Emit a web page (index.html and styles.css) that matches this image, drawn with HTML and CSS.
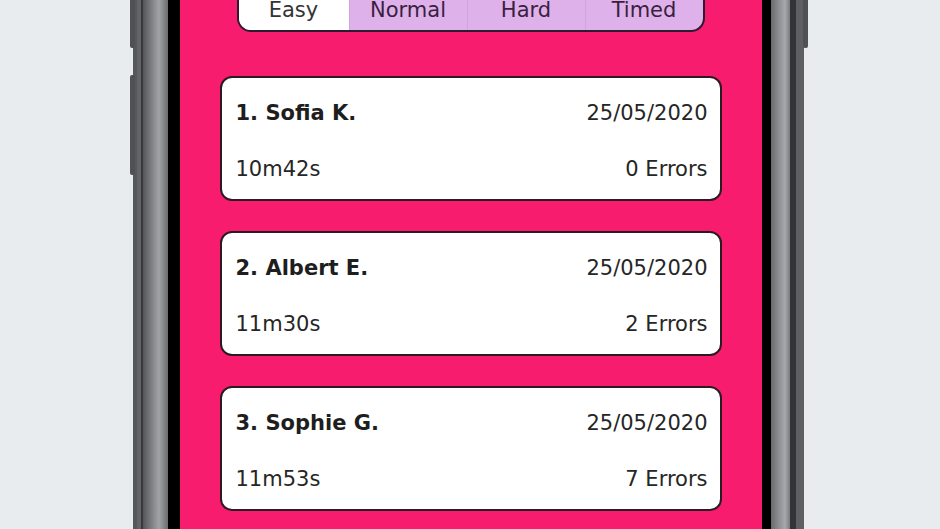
FILE: index.html
```html
<html>

<head>
  <title>Leaderboard</title>
  <link rel="stylesheet" href="styles.css">
</head>

<body>

  <div class="phone">
    <span class="btn btn-mute"></span>
    <span class="btn btn-volume"></span>
    <span class="btn btn-power"></span>
    <main class="screen">
      <nav class="modes">
        <span class="mode active">Easy</span>
        <span class="mode">Normal</span>
        <span class="mode">Hard</span>
        <span class="mode">Timed</span>
      </nav>
      <section class="scores">
        <article class="score">
          <div class="row">
            <span class="name">1. Sofia K.</span>
            <span>25/05/2020</span>
          </div>
          <div class="row">
            <span>10m42s</span>
            <span>0 Errors</span>
          </div>
        </article>
        <article class="score">
          <div class="row">
            <span class="name">2. Albert E.</span>
            <span>25/05/2020</span>
          </div>
          <div class="row">
            <span>11m30s</span>
            <span>2 Errors</span>
          </div>
        </article>
        <article class="score">
          <div class="row">
            <span class="name">3. Sophie G.</span>
            <span>25/05/2020</span>
          </div>
          <div class="row">
            <span>11m53s</span>
            <span>7 Errors</span>
          </div>
        </article>
      </section>
    </main>
  </div>

</body>

</html>
```
FILE: styles.css
```css
body {
  margin: 0;
  padding-right: 4px;
  height: 100vh;
  overflow: hidden;
  background-color: #e8ecef;
  font-family: "Comic Sans MS", "DejaVu Sans", sans-serif;
}

/* device frame, cut off above and below the window */
.phone {
  position: relative;
  width: 671px;
  height: 660px;
  margin: -57px auto 0;
  display: flex;
  background: linear-gradient(to right,
      #56575b 0, #56575b 4px,
      #636468 4px, #636468 8px,
      #38393d 8px, #38393d 10px,
      #55565a 10px, #a2a3a7 26px, #6b6c70 35px,
      #000 35px, #000 calc(100% - 33px),
      #6a6b6f calc(100% - 33px), #a8a9ad calc(100% - 19px), #7a7b7f calc(100% - 14px),
      #333438 calc(100% - 14px), #333438 calc(100% - 8px),
      #5e5f63 calc(100% - 8px));
}

.btn {
  position: absolute;
  width: 5px;
  border-radius: 2px;
  background-color: #505155;
}

.btn-mute {
  left: -3px;
  top: 0;
  height: 105px;
}

.btn-volume {
  left: -3px;
  top: 132px;
  height: 100px;
}

.btn-power {
  right: -4px;
  top: 0;
  height: 105px;
}

.screen {
  flex: 1;
  margin: 0 33px 0 35px;
  border-left: 12px solid #000;
  border-right: 9px solid #000;
  background-color: #f81c6f;
  padding: 47px 40px 0;
  display: flex;
  flex-direction: column;
}

.modes {
  display: flex;
  height: 40px;
  margin: 0 17px;
  border: 2px solid #2d1a2e;
  border-top: none;
  border-radius: 0 0 14px 14px;
  overflow: hidden;
  background-color: #dfb1ea;
}

.mode {
  flex: 1;
  display: flex;
  align-items: center;
  justify-content: center;
  font-size: 21px;
  color: #3a1f3f;
  border-left: 1px solid #d3a3de;
}

.mode:first-child {
  border-left: none;
}

.mode.active {
  background-color: #fff;
  color: #333;
  flex: 0 0 110px;
}

.scores {
  margin-top: 44px;
  display: flex;
  flex-direction: column;
  gap: 30px;
}

.score {
  background-color: #fff;
  border: 2px solid #2b1a22;
  border-radius: 12px;
  padding: 21px 12px 16px 14px;
  display: flex;
  flex-direction: column;
  gap: 28px;
  font-size: 21px;
  color: #262626;
}

.row {
  display: flex;
  justify-content: space-between;
  line-height: 28px;
}

.name {
  font-weight: bold;
  color: #1e1e1e;
}
```
